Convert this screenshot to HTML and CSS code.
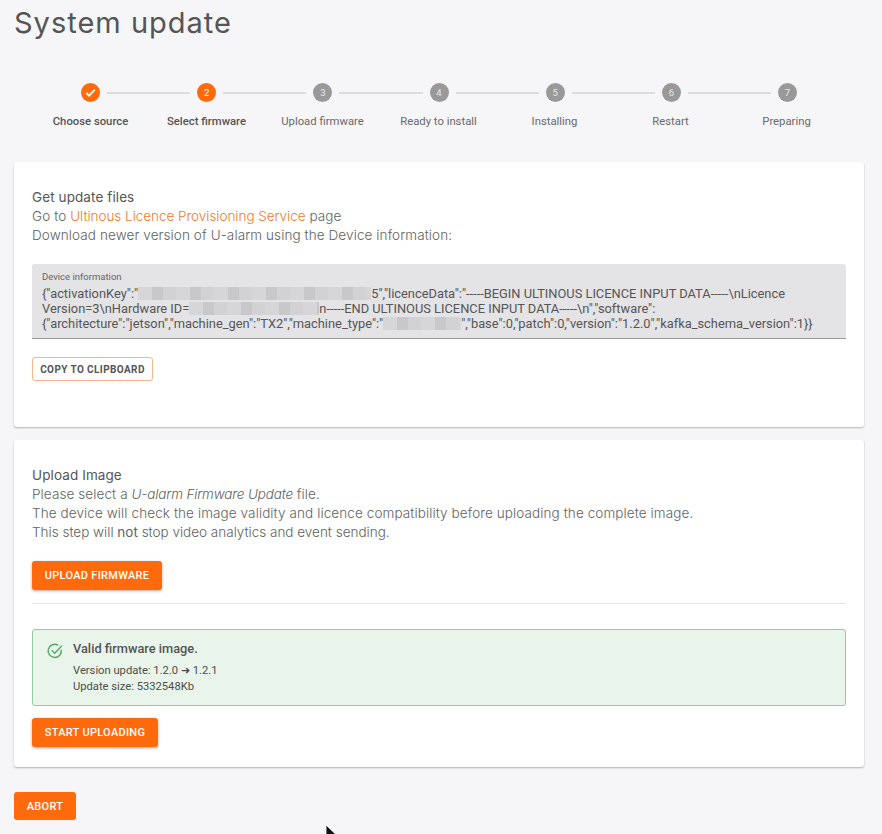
FILE: index.html
```html
<!DOCTYPE html>
<html lang="en">
<head>
    <meta charset="UTF-8">
    <meta name="viewport" content="width=device-width, initial-scale=1.0">
    <title>System update</title>
    <link rel="stylesheet" href="styles.css">
</head>
<body>
    <div class="page">
        <h1 class="page-title">System update</h1>

        <div class="stepper">
            <div class="step-track">
                <span class="step-dot step-active">
                    <svg width="13" height="13" viewBox="0 0 13 13"><path d="M2.2 6.800l2.900 2.900 5.700-6" fill="none" stroke="#fff" stroke-width="1.8"/></svg>
                </span>
                <span class="step-line"></span>
                <span class="step-dot step-active">2</span>
                <span class="step-line"></span>
                <span class="step-dot">3</span>
                <span class="step-line"></span>
                <span class="step-dot">4</span>
                <span class="step-line"></span>
                <span class="step-dot">5</span>
                <span class="step-line"></span>
                <span class="step-dot">6</span>
                <span class="step-line"></span>
                <span class="step-dot">7</span>
            </div>
            <div class="step-labels">
                <span class="step-label step-label-active">Choose source</span>
                <span class="step-label step-label-active">Select firmware</span>
                <span class="step-label">Upload firmware</span>
                <span class="step-label">Ready to install</span>
                <span class="step-label">Installing</span>
                <span class="step-label">Restart</span>
                <span class="step-label">Preparing</span>
            </div>
        </div>

        <div class="card card-files">
            <div class="card-text">
                <div class="card-heading">Get update files</div>
                <div>Go to <a class="link" href="#">Ultinous Licence Provisioning Service</a> page</div>
                <div>Download newer version of U-alarm using the Device information:</div>
            </div>
            <div class="device-info">
                <div class="device-label">Device information</div>
                <div class="device-value">
                    {"activationKey":"<span class="blur blur-key"></span>5","licenceData":"-----BEGIN ULTINOUS LICENCE INPUT DATA-----\nLicence<br>
                    Version=3\nHardware ID=<span class="blur blur-hw"></span>n-----END ULTINOUS LICENCE INPUT DATA-----\n","software":<br>
                    {"architecture":"jetson","machine_gen":"TX2","machine_type":"<span class="blur blur-type"></span>","base":0,"patch":0,"version":"1.2.0","kafka_schema_version":1}}
                </div>
            </div>
            <button type="button" class="btn-outline">Copy to clipboard</button>
        </div>

        <div class="card card-upload">
            <div class="card-text">
                <div class="card-heading">Upload Image</div>
                <div>Please select a <em class="file-name">U-alarm Firmware Update</em> file.</div>
                <div>The device will check the image validity and licence compatibility before uploading the complete image.</div>
                <div class="card-note">This step will <span class="strong">not</span> stop video analytics and event sending.</div>
            </div>
            <button type="button" class="btn btn-upload">Upload firmware</button>
            <hr class="divider">
            <div class="alert">
                <svg class="alert-icon" width="18" height="18" viewBox="0 0 18 18" fill="none" stroke="#5aa868" stroke-width="1.4">
                    <path d="M15.200 7.600a6.600 6.600 0 1 1-3-4.300"/>
                    <path d="M5.800 8.200l3 3 7-7.400"/>
                </svg>
                <div>
                    <div class="alert-title">Valid firmware image.</div>
                    <div class="alert-line">Version update: 1.2.0 ➜ 1.2.1</div>
                    <div class="alert-line">Update size: 5332548Kb</div>
                </div>
            </div>
            <button type="button" class="btn btn-start">Start uploading</button>
        </div>

        <button type="button" class="btn btn-abort">Abort</button>
    </div>

    <svg class="cursor" width="14" height="20" viewBox="0 0 14 20"><path d="M1 1v15l4-3.500 3 6 2-1-3-6h5z" fill="#111" stroke="#fff" stroke-width="0.8"/></svg>
</body>
</html>
```

FILE: styles.css
```css
html, body {
    height: 100%;
}
body {
    margin: 0;
    background-color: #f6f5f8;
    color: #5c5c5c;
    font-family: Roboto, Arial, sans-serif;
    overflow: hidden;
}
.page {
    padding: 0 18px 0 14px;
}
.page-title {
    margin: 0;
    padding-top: 6px;
    height: 56px;
    box-sizing: border-box;
    font-family: Inter, "Open Sans", sans-serif;
    font-size: 29px;
    line-height: 34px;
    font-weight: 400;
    letter-spacing: 1px;
    color: #555;
}

/* stepper */
.stepper {
    height: 106px;
    padding-top: 27px;
    box-sizing: border-box;
}
.step-track {
    display: flex;
    align-items: center;
    padding: 0 67px;
}
.step-dot {
    flex: none;
    display: flex;
    align-items: center;
    justify-content: center;
    width: 19px;
    height: 19px;
    border-radius: 50%;
    background-color: #999;
    color: #e8e8e8;
    font-size: 9.5px;
}
.step-active {
    background-color: #ff6a0d;
    color: #fff;
}
.step-line {
    flex: 1;
    height: 2px;
    margin: 0 7px;
    background-color: #dcdcdc;
}
.step-labels {
    display: grid;
    grid-template-columns: repeat(7, 116px);
    margin: 12px 0 0 18.500px;
}
.step-label {
    text-align: center;
    font-size: 11.300px;
    line-height: 16px;
    color: #6a6a6a;
}
.step-label-active {
    font-weight: 500;
    color: #555;
}

/* cards */
.card {
    background-color: #fff;
    border-radius: 3px;
    box-shadow: 0 1px 2px rgba(0, 0, 0, 0.28);
    padding: 0 18px;
    box-sizing: border-box;
}
.card-files {
    height: 265px;
    padding-top: 26px;
}
.card-upload {
    height: 327px;
    margin-top: 13px;
    padding-top: 26px;
}
.card-text {
    font-family: Inter, "Open Sans", sans-serif;
    font-size: 13.500px;
    line-height: 19px;
    letter-spacing: 0.1px;
    font-weight: 300;
    color: #626262;
}
.card-heading {
    font-weight: 400;
    color: #555;
}
.card-note {
    letter-spacing: 0;
}
.file-name {
    letter-spacing: -0.15px;
}
.strong {
    font-weight: 400;
}
.link {
    color: #f07a2a;
    letter-spacing: -0.03px;
    text-decoration: none;
}
.device-info {
    margin-top: 19px;
    height: 75px;
    padding: 7px 10px 0;
    box-sizing: border-box;
    background-color: #e4e3e5;
    border-bottom: 1px solid #9a9a9a;
    border-radius: 3px 3px 0 0;
    color: #555;
}
.device-label {
    font-size: 9.500px;
    line-height: 12px;
    color: #666;
}
.device-value {
    font-size: 12.850px;
    line-height: 15px;
    margin-top: 3px;
}
.blur {
    display: inline-block;
    height: 13px;
    vertical-align: -2px;
    background-color: #d2d1d3;
    background-image: repeating-linear-gradient(90deg, #d6d5d7 0 14px, #c8c7c9 14px 25px, #d2d1d3 25px 38px);
}
.blur-key {
    width: 233px;
}
.blur-hw {
    width: 130px;
}
.blur-type {
    width: 78px;
}

/* buttons */
button {
    display: block;
    font-family: Roboto, Arial, sans-serif;
    text-transform: uppercase;
    cursor: pointer;
    border-radius: 3px;
}
.btn-outline {
    margin-top: 18px;
    width: 121px;
    height: 24px;
    padding: 0;
    background-color: #fff;
    border: 1px solid #f3b68e;
    color: #555;
    font-size: 10px;
    font-weight: 700;
    letter-spacing: 0.4px;
}
.btn {
    height: 29px;
    padding: 0;
    background-color: #ff6a0d;
    border: none;
    color: #fff;
    font-size: 11px;
    font-weight: 500;
    letter-spacing: 0.3px;
    box-shadow: 0 1px 3px rgba(0, 0, 0, 0.35);
}
.btn-upload {
    margin-top: 19px;
    width: 130px;
}
.btn-start {
    margin-top: 12px;
    width: 126px;
}
.btn-abort {
    margin-top: 25px;
    width: 62px;
    height: 28px;
    box-shadow: none;
}
.divider {
    margin: 13px 0 25px;
    border: none;
    border-top: 1px solid #e4e4e4;
}

/* alert */
.alert {
    display: flex;
    gap: 8px;
    height: 77px;
    padding: 10px 14px 0;
    box-sizing: border-box;
    background-color: #e9f4ea;
    border: 1px solid #97cb9f;
    border-radius: 3px;
    color: #4a4f4a;
}
.alert-icon {
    flex: none;
    margin: 2px 1px 0 -1px;
}
.alert-title {
    font-size: 12.800px;
    line-height: 17px;
    font-weight: 500;
    color: #555;
    margin-bottom: 6px;
}
.alert-line {
    font-size: 11.200px;
    line-height: 15.500px;
}

/* mouse pointer caught in the capture */
.cursor {
    position: absolute;
    left: 325px;
    top: 824px;
}
```
